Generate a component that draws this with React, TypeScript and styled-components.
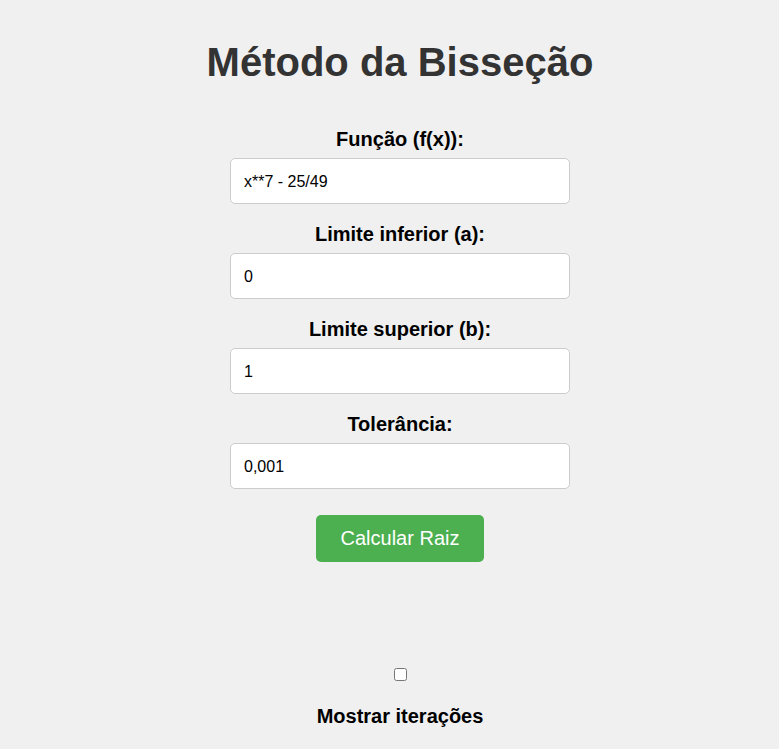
import React, { useState } from "react";
import styled, { createGlobalStyle } from "styled-components";

const GlobalStyle = createGlobalStyle`
  html, body {
    margin: 0;
    padding: 0;
    background: #f0f0f0;
    font-family: "Liberation Sans", Arial, sans-serif;
  }
`;

const Page = styled.div`
  box-sizing: border-box;
  width: 100%;
  padding: 39px 0 20px 21px;
  display: flex;
  flex-direction: column;
  align-items: center;
`;

const Title = styled.h1`
  margin: 0 0 43px;
  font-size: 40px;
  line-height: 46px;
  font-weight: bold;
  color: #333;
  text-align: center;
`;

const Form = styled.form`
  width: 340px;
  display: flex;
  flex-direction: column;
  align-items: center;
  gap: 19px;
`;

const Field = styled.div`
  width: 100%;
  display: flex;
  flex-direction: column;
  align-items: center;
  gap: 7px;
`;

const Label = styled.label`
  font-size: 20px;
  line-height: 23px;
  font-weight: bold;
  color: #000;
  text-align: center;
`;

const Input = styled.input`
  box-sizing: border-box;
  width: 100%;
  height: 46px;
  padding: 1px 13px 0;
  border: 1px solid #ccc;
  border-radius: 5px;
  background: #fff;
  font-family: "Liberation Sans", Arial, sans-serif;
  font-size: 16px;
  color: #000;
  outline: none;
`;

const Button = styled.button`
  margin-top: 7px;
  padding: 12px 25px;
  border: none;
  border-radius: 5px;
  background: #4caf50;
  color: #fff;
  font-family: "Liberation Sans", Arial, sans-serif;
  font-size: 20px;
  line-height: 23px;
  cursor: pointer;
`;

const Options = styled.div`
  margin-top: 103px;
  display: flex;
  flex-direction: column;
  align-items: center;
  gap: 21px;
`;

const Checkbox = styled.input`
  width: 13px;
  height: 13px;
  margin: 3px;
`;

const fields = [
  { id: "func", label: "Função (f(x)):", value: "x**7 - 25/49" },
  { id: "a", label: "Limite inferior (a):", value: "0" },
  { id: "b", label: "Limite superior (b):", value: "1" },
  { id: "tol", label: "Tolerância:", value: "0,001" },
];

export default function App() {
  const [values, setValues] = useState<Record<string, string>>(
    Object.fromEntries(fields.map((f) => [f.id, f.value]))
  );
  const [show, setShow] = useState(false);

  return (
    <>
      <GlobalStyle />
      <Page>
        <Title>Método da Bisseção</Title>
        <Form onSubmit={(e) => e.preventDefault()}>
          {fields.map((f) => (
            <Field key={f.id}>
              <Label htmlFor={f.id}>{f.label}</Label>
              <Input
                id={f.id}
                type="text"
                value={values[f.id]}
                onChange={(e) => setValues({ ...values, [f.id]: e.target.value })}
              />
            </Field>
          ))}
          <Button type="submit">Calcular Raiz</Button>
        </Form>
        <Options>
          <Checkbox
            id="iter"
            type="checkbox"
            checked={show}
            onChange={(e) => setShow(e.target.checked)}
          />
          <Label htmlFor="iter">Mostrar iterações</Label>
        </Options>
      </Page>
    </>
  );
}
